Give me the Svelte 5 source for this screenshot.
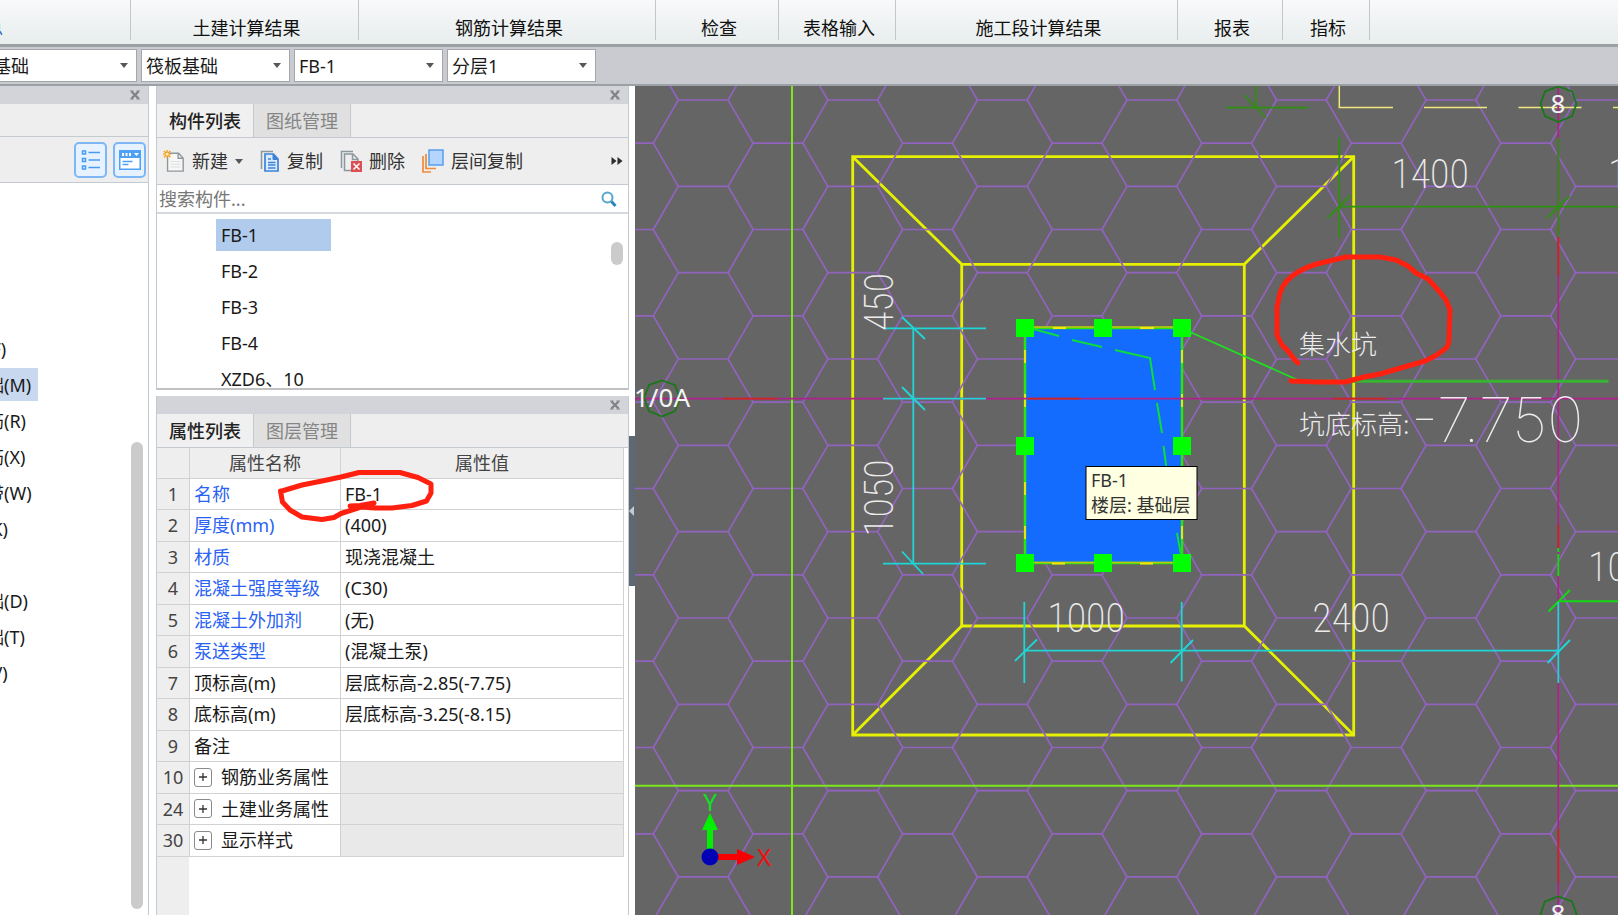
<script lang="ts">
  const groups = [
    { label: '汇总', width: 131, cut: true },
    { label: '土建计算结果', width: 228 },
    { label: '钢筋计算结果', width: 297 },
    { label: '检查', width: 123 },
    { label: '表格输入', width: 117 },
    { label: '施工段计算结果', width: 282 },
    { label: '报表', width: 105 },
    { label: '指标', width: 87 },
  ];

  const filters = [
    { id: 'category', label: '构件大类', value: '基础' },
    { id: 'type', label: '构件类型', value: '筏板基础' },
    { id: 'member', label: '构件名称', value: 'FB-1' },
    { id: 'layer', label: '分层', value: '分层1' },
  ];

  const modules = [
    '基础梁(F)', '筏板基础(M)', '筏板主筋(R)', '筏板负筋(X)', '基础板带(W)', '集水坑(K)',
    '柱墩(Y)', '独立基础(D)', '条形基础(T)', '桩承台(V)',
  ];
  let activeModule = $state('筏板基础(M)');

  const members = ['FB-1', 'FB-2', 'FB-3', 'FB-4', 'XZD6、10'];
  let activeMember = $state('FB-1');

  const properties = [
    { no: 1, name: '名称', value: 'FB-1', shared: true },
    { no: 2, name: '厚度(mm)', value: '(400)', shared: true },
    { no: 3, name: '材质', value: '现浇混凝土', shared: true },
    { no: 4, name: '混凝土强度等级', value: '(C30)', shared: true },
    { no: 5, name: '混凝土外加剂', value: '(无)', shared: true },
    { no: 6, name: '泵送类型', value: '(混凝土泵)', shared: true },
    { no: 7, name: '顶标高(m)', value: '层底标高-2.85(-7.75)' },
    { no: 8, name: '底标高(m)', value: '层底标高-3.25(-8.15)' },
    { no: 9, name: '备注', value: '' },
    { no: 10, name: '钢筋业务属性', value: '', group: true },
    { no: 24, name: '土建业务属性', value: '', group: true },
    { no: 30, name: '显示样式', value: '', group: true },
  ];

  // raft slab hatch: one open hexagon outline per cell
  const HEX_W = 149.55;
  const HEX_H = 86.33;
  function hatch() {
    let d = '';
    for (let c = -1; c < 9; c++) {
      for (let r = -1; r < 12; r++) {
        const x = 678.3 + c * HEX_W;
        const y = 100 + r * HEX_H;
        d += `M${x - 25} ${y + HEX_H / 2}L${x} ${y}H${x + 49.8}L${x + 74.8} ${y + HEX_H / 2}H${x + 124.6}`;
        d += `M${x - 25} ${y + HEX_H / 2}L${x} ${y + HEX_H}M${x + 74.8} ${y + HEX_H / 2}L${x + 49.8} ${y + HEX_H}`;
      }
    }
    return d;
  }

  const grips = [
    [1025, 328], [1103, 328], [1182, 328],
    [1025, 446], [1182, 446],
    [1025, 563], [1103, 563], [1182, 563],
  ];
</script>

{#snippet panelBar()}
  <div class="panel-bar">
    <button class="close" aria-label="关闭">
      <svg viewBox="0 0 10 10" width="10" height="10"><path d="M1.500 1.500L8.500 8.500M8.500 1.500L1.500 8.500" stroke="#808284" stroke-width="2.300" /><path d="M0 1h3.500M6.500 1H10M0 9h3.500M6.500 9H10" stroke="#808284" stroke-width="1" /></svg>
    </button>
  </div>
{/snippet}

<div class="app">
  <header class="ribbon">
    {#each groups as group}
      <div class="group" class:cut={group.cut} style="width: {group.width}px">{group.label}</div>
    {/each}
  </header>

  <div class="filters">
    {#each filters as filter}
      <div class="filter">
        <select id={filter.id} aria-label={filter.label}>
          <option>{filter.value}</option>
        </select>
        <svg class="caret" viewBox="0 0 8 5" width="8" height="5"><path d="M0 0h8L4 5z" fill="#55585a" /></svg>
      </div>
    {/each}
  </div>

  <main class="workspace">
    <aside class="modules">
      {@render panelBar()}
      <div class="modules-head"></div>
      <div class="modules-tools">
        <button class="view" aria-label="列表视图">
          <svg viewBox="0 0 20 20" width="20" height="20" fill="none" stroke="#4a9bf0" stroke-width="1.500">
            <path d="M1.500 1h3v3h-3zM1.500 8.500h3v3h-3zM1.500 16h3v3h-3z" />
            <path d="M7.500 2.500H19M7.500 10H19M7.500 17.500H19" />
          </svg>
        </button>
        <button class="view" aria-label="面板视图">
          <svg viewBox="0 0 22 20" width="22" height="20">
            <path d="M0 0h22v20H0z" fill="#4ea1f5" />
            <path d="M1.500 8h19v10.500h-19z" fill="#fff" />
            <path d="M3 3h2v3H3zM6.500 3h2v3h-2zM10 3h2v3h-2zM15 3h5l-2.500 3z" fill="#fff" />
            <path d="M3.500 11.500h10M3.500 14.500h6" stroke="#4ea1f5" stroke-width="1.500" />
          </svg>
        </button>
      </div>
      <ul class="module-list">
        {#each modules as name}
          <li>
            <button class:active={name === activeModule} onclick={() => (activeModule = name)}>{name}</button>
          </li>
        {/each}
      </ul>
      <div class="scroll-thumb modules-thumb"></div>
    </aside>

    <div class="middle">
      <section class="panel">
        {@render panelBar()}
        <div class="tabs">
          <button class="tab active">构件列表</button>
          <button class="tab">图纸管理</button>
        </div>
        <div class="tools">
          <button>
            <svg viewBox="0 0 24 24" width="22" height="22">
              <path d="M5 3.500h12l5 5.500v14H5z" fill="#f7f7f7" stroke="#8b979d" stroke-width="1.500" />
              <path d="M16.500 3.500v5.500H22" fill="none" stroke="#8b979d" stroke-width="1.500" />
              <path d="M8 12.500h11M8 15.500h11M8 18.500h11" stroke="#dcdcdc" />
              <path d="M1 1l7 7M8 1L1 8M4.500 0v9M0 4.500h9" stroke="#f6a01f" stroke-width="1.500" />
              <circle cx="4.500" cy="4.500" r="1.500" fill="#fff3c0" />
            </svg>
            <span>新建</span>
            <svg viewBox="0 0 8 5" width="8" height="5"><path d="M0 0h8L4 5z" fill="#55585a" /></svg>
          </button>
          <button>
            <svg viewBox="0 0 20 24" width="20" height="24">
              <path d="M1.500 20V2.500H13" fill="none" stroke="#8b979d" stroke-width="1.500" />
              <path d="M5 5h8.500l4.500 5v12H5z" fill="#dcecff" stroke="#3c82d6" stroke-width="1.700" />
              <path d="M13 5v5.500h5" fill="#3c82d6" stroke="#3c82d6" />
              <path d="M8 10h3M8 13.500h7.500M8 16h7.500M8 19h7.500" stroke="#3c82d6" stroke-width="1.300" />
            </svg>
            <span>复制</span>
          </button>
          <button>
            <svg viewBox="0 0 22 24" width="22" height="24">
              <path d="M1.500 19V2.500H13" fill="none" stroke="#8b979d" stroke-width="1.500" />
              <path d="M11 21.500H4.500V5H13l5 5v2" fill="none" stroke="#8b979d" stroke-width="1.500" />
              <path d="M12.500 5v5.500H18" fill="none" stroke="#8b979d" stroke-width="1.500" />
              <path d="M11 12h11v11H11z" fill="#d94f53" />
              <path d="M13.500 14.500l6 6M19.500 14.500l-6 6" stroke="#fff" stroke-width="1.500" />
            </svg>
            <span>删除</span>
          </button>
          <button>
            <svg viewBox="0 0 22 24" width="22" height="24">
              <path d="M1 7v16h8M4 5v14.500h10" fill="none" stroke="#f08a3c" stroke-width="1.700" />
              <path d="M7 1h14v15H7z" fill="#b3d5ff" stroke="#5a9fee" stroke-width="1.500" />
            </svg>
            <span>层间复制</span>
          </button>
          <button class="overflow" aria-label="更多">
            <svg viewBox="0 0 12 10" width="12" height="10"><path d="M0.500 1l5 4-5 4zM6.500 1l5 4-5 4z" fill="#2c2c2c" /></svg>
          </button>
        </div>
        <div class="search">
          <input type="text" placeholder="搜索构件..." aria-label="搜索构件" />
          <svg viewBox="0 0 16 16" width="16" height="16" fill="none">
            <circle cx="6.500" cy="6.500" r="5" stroke="#55a5cf" stroke-width="2" />
            <path d="M10.500 10.500l4 4.500" stroke="#2f86bb" stroke-width="3" />
          </svg>
        </div>
        <ul class="member-list">
          {#each members as name}
            <li>
              <button class:active={name === activeMember} onclick={() => (activeMember = name)}>{name}</button>
            </li>
          {/each}
          <li class="scroll-thumb member-thumb" aria-hidden="true"></li>
        </ul>
      </section>

      <section class="panel props">
        {@render panelBar()}
        <div class="tabs">
          <button class="tab active">属性列表</button>
          <button class="tab">图层管理</button>
        </div>
        <div class="props-body">
          <table>
            <thead>
              <tr><th class="no"></th><th class="name">属性名称</th><th>属性值</th></tr>
            </thead>
            <tbody>
              {#each properties as prop}
                <tr class:group-row={prop.group}>
                  <td class="no">{prop.no}</td>
                  <td class="name" class:shared={prop.shared}>
                    {#if prop.group}
                      <div class="expandable">
                        <button class="expand" aria-label="展开{prop.name}">
                          <svg viewBox="0 0 8 8" width="8" height="8"><path d="M0 4h8M4 0v8" stroke="#333" stroke-width="1.300" /></svg>
                        </button>
                        {prop.name}
                      </div>
                    {:else}
                      {prop.name}
                    {/if}
                  </td>
                  <td class="value">{prop.value}</td>
                </tr>
              {/each}
            </tbody>
          </table>
          <svg class="ink" viewBox="0 0 160 60" width="160" height="60">
            <path d="M6 20L26 14L46 10L65 6L83 1.500H124L142 6.500L155 13L155 22L150.500 30L136 34.500L116 37H99L85 36L65 42.500L58 46.500L46 48.500L26 46L14 39L6.500 31L4.500 20ZM74 35L84 34.500L98 32" transform="translate(0 3)" />
          </svg>
        </div>
      </section>
    </div>

    <div class="gutter">
      <button class="splitter" aria-label="收起面板">
        <svg viewBox="0 0 5 10" width="5" height="10"><path d="M5 0v10L0 5z" fill="#c3cad0" /></svg>
      </button>
    </div>

    <section class="canvas">
      <svg class="drawing" viewBox="635 86 983 829" preserveAspectRatio="xMinYMin slice" fill="none">
        <g stroke="#e6f000" stroke-width="2.800">
          <path d="M852.700 156.700H1353.700V735H852.700zM961.700 264.300H1244.300V626H961.700z" />
          <path d="M852.700 156.700L961.700 264.300M1353.700 156.700L1244.300 264.300M852.700 735L961.700 626M1353.700 735L1244.300 626" />
        </g>

        <path d={hatch()} stroke="#9163bf" stroke-width="1.700" />

        <path d="M792 86V915M635 785.700H1618" stroke="#7be61a" stroke-width="2" />

        <!-- beam edges -->
        <g stroke="#efe97c" stroke-width="1.500">
          <path d="M1339.300 86V107.500H1393M1424 107.500H1487M1518.500 107.500H1581.500M1613 107.500H1618" />
        </g>

        <rect x="1025" y="328" width="157" height="235" fill="#146cff" stroke="#2ae40c" stroke-width="2.500" />
        <path d="M1025 350V555M1182 350V555" stroke="#e6e80c" stroke-width="2" stroke-dasharray="13 31" />
        <path d="M1034 327H1173M1034 562.500H1173" stroke="#c2c80e" stroke-width="1.500" />
        <path d="M1053 328h13M1140 328h14M1052 563.500h13M1140 563.500h13" stroke="#f2e80c" stroke-width="2" />

        <!-- grid axes -->
        <path d="M635 398.700H1618M1558.300 86V915" stroke="#b0208c" stroke-width="1.700" />
        <path d="M723 398.700H777M1028 398.700H1080M1333 398.700H1386M1558.300 237V275M1558.300 525V548M1558.300 829V882" stroke="#d02420" stroke-width="1.700" />

        <path d="M1033 329L1059 336M1072 340L1102 347M1115 350L1150 358L1155 390M1157 403L1162 433M1163.500 446L1167 472M1177 533L1181 555" stroke="#0cdc3c" stroke-width="2" />
        <path d="M1190 332L1300 381" stroke="#20e020" stroke-width="1.800" />
        <path d="M1298 381.300H1608.500" stroke="#38b432" stroke-width="3" />

        <g stroke="#2f8f10" stroke-width="1.800">
          <path d="M1340 206.700H1618M1339.300 138V237.500M1558.300 138V237" />
          <path d="M1327.500 218L1350.500 195.500M1547 218L1569.500 196" />
          <path d="M1226 107.700H1308.500M1256 86V107M1244 95L1266 118" />
        </g>
        <path d="M1558.300 548V577" stroke="#14d814" stroke-width="2" stroke-dasharray="4 2 22" />
        <path d="M1559 601.300H1618M1548.500 611.500L1570 590" stroke="#14d814" stroke-width="2" />

        <!-- dimension lines -->
        <g stroke="#1fd6d6" stroke-width="1.800">
          <path d="M885 328.300H986M883 398.700H986M883 563.700H986M913.300 328V564" />
          <path d="M902 317L925 339M902 387L925 410M902 551.500L923 574" />
          <path d="M1024.300 650.700H1558.300M1024.300 602V683M1181.700 602V681.500M1558.300 602V683" />
          <path d="M1015 661L1037 639.500M1170.500 663L1193 640M1547.500 663L1570 640" />
        </g>

        <g fill="#00ff00">
          {#each grips as [x, y]}
            <rect x={x - 9} y={y - 9} width="18" height="18" />
          {/each}
        </g>

        <g stroke="#187818" stroke-width="1.800">
          <path d="M662 380.500L675 385L680 398L675 411L662 416.500L649 411L644 398L649 385z" />
          <path d="M1558.500 86.500L1572 91.500L1576.500 104L1572 116L1558.500 122L1545 116L1540.500 104L1545 91.500z" />
          <path d="M1558.500 896.500L1572 901.500L1576.500 914L1572 926L1558.500 932L1545 926L1540.500 914L1545 901.500z" />
        </g>
        <g class="axis-label" fill="#f4f4f4">
          <text x="690" y="407" text-anchor="end">1/0A</text>
          <text x="1558" y="113" text-anchor="middle">8</text>
          <text x="1558" y="923" text-anchor="middle">8</text>
        </g>

        <g class="dim" fill="#ececec">
          <text x="1430" y="188" text-anchor="middle">1400</text>
          <text x="1608" y="188">1</text>
          <text x="1086" y="632" text-anchor="middle">1000</text>
          <text x="1351" y="632" text-anchor="middle">2400</text>
          <text x="1588" y="581">1000</text>
          <text transform="translate(893 302) rotate(-90)" text-anchor="middle">450</text>
          <text transform="translate(893 498) rotate(-90)" text-anchor="middle">1050</text>
        </g>
        <g class="note" fill="#ececec">
          <text x="1299" y="354">集水坑</text>
          <text x="1299" y="434">坑底标高:</text>
        </g>
        <text class="level" x="1411" y="442" fill="#ececec">-7.750</text>

        <!-- ucs icon -->
        <path d="M710 857V829" stroke="#00f000" stroke-width="6" />
        <path d="M702 830L710 813L718 830z" fill="#00f000" />
        <path d="M710 857H738" stroke="#f80000" stroke-width="6" />
        <path d="M737 849L755 857L737 865z" fill="#f80000" />
        <circle cx="710" cy="857" r="8.500" fill="#0000b4" />
        <g class="ucs" text-anchor="middle">
          <text x="710" y="811" fill="#10e020">Y</text>
          <text x="764" y="866" fill="#f01010">X</text>
        </g>

        <g class="tooltip">
          <rect x="1086" y="466.500" width="111" height="53" fill="#ffffe1" stroke="#000" />
          <text x="1091" y="487" fill="#333">FB-1</text>
          <text x="1091" y="512" fill="#333">楼层: 基础层</text>
        </g>

        <path
          class="redline"
          d="M1298 363L1294 359L1288 351L1282 345L1277 335V307L1280 293Q1284 280 1298 272Q1310 265 1325 262L1346 257H1380L1396 260L1408 266L1416 273L1428 279L1439 291L1446 300L1450 310L1449 338Q1449 346 1445 349L1435 356L1425 361L1380 374L1364 377L1345 382H1318L1291 381"
        />
      </svg>
    </section>
  </main>
</div>

<style>
  :global(body) {
    margin: 0;
  }
  .app {
    display: flex;
    flex-direction: column;
    height: 100vh;
    overflow: hidden;
    background: #fff;
    color: #1a1a1a;
    font: 18px/24px 'Noto Sans', 'Noto Sans CJK SC', sans-serif;
  }
  button,
  input,
  select {
    font: inherit;
    color: inherit;
    margin: 0;
    padding: 0;
    border: 0;
    background: none;
    border-radius: 0;
  }
  ul {
    list-style: none;
    margin: 0;
    padding: 0;
  }

  .ribbon {
    display: flex;
    flex: none;
    height: 44px;
    border-bottom: 3px solid #9ba1a5;
    background: linear-gradient(#f8f9fa, #e8eded);
  }
  .group {
    box-sizing: border-box;
    flex: none;
    height: 40px;
    padding: 16px 0 0 4px;
    border-right: 1px solid #c3c7c9;
    text-align: center;
    white-space: nowrap;
    color: #111;
  }
  .group.cut {
    padding: 16px 127px 0 0;
    direction: rtl;
    color: #2b6cb8;
  }

  .filters {
    display: flex;
    flex: none;
    gap: 4px;
    padding: 2px 0;
    margin-left: -12px;
    border-bottom: 2px solid #9ba1a5;
    background: #c9cbd0;
  }
  .filter {
    display: grid;
    align-items: center;
    width: 149px;
  }
  .filter select {
    grid-area: 1 / 1;
    box-sizing: border-box;
    width: 100%;
    height: 33px;
    padding: 0 24px 0 4px;
    border: 1px solid #a3a6aa;
    background: #fff;
    appearance: none;
  }
  .caret {
    grid-area: 1 / 1;
    justify-self: end;
    margin-right: 9px;
    pointer-events: none;
  }

  .workspace {
    display: flex;
    flex: 1;
    min-height: 0;
  }
  .panel-bar {
    display: flex;
    flex: none;
    justify-content: flex-end;
    align-items: center;
    height: 18px;
    padding-right: 8px;
    background: #d3d4d9;
  }
  .close {
    display: flex;
  }
  .scroll-thumb {
    width: 12px;
    border-radius: 6px;
    background: #cbcbcb;
  }

  .modules {
    position: relative;
    flex: none;
    width: 148px;
    margin-right: 7px;
    border-right: 1px solid #c5cad0;
    overflow: hidden;
  }
  .modules-head {
    height: 32px;
    background: #eee;
    border-bottom: 1px solid #c5cad0;
  }
  .modules-tools {
    display: flex;
    justify-content: flex-end;
    align-items: center;
    gap: 6px;
    height: 45px;
    padding-right: 2px;
    background: #eee;
    border-bottom: 1px solid #c5cad0;
  }
  .view {
    display: flex;
    align-items: center;
    justify-content: center;
    box-sizing: border-box;
    width: 33px;
    height: 36px;
    border: 2px solid #7db7f5;
    border-radius: 5px;
    background: #e6f2ff;
  }
  .module-list {
    display: flex;
    flex-direction: column;
    gap: 3px;
    margin: 149px 0 0 -71px;
  }
  .module-list li,
  .member-list li {
    display: flex;
  }
  .module-list button {
    height: 33px;
    padding: 0 7px 0 3px;
    white-space: nowrap;
  }
  .module-list .active {
    background: #c8d8ef;
  }
  .modules-thumb {
    position: absolute;
    right: 5px;
    top: 356px;
    bottom: 6px;
  }

  .middle {
    display: flex;
    flex-direction: column;
    gap: 6px;
    flex: none;
    width: 473px;
  }
  .panel {
    display: flex;
    flex-direction: column;
    flex: none;
    border: solid #c5cad0;
    border-width: 0 1px;
  }
  .tabs {
    display: flex;
    flex: none;
    height: 33px;
    background: #eee;
    border-bottom: 1px solid #c5cad0;
  }
  .tab {
    box-sizing: border-box;
    width: 97px;
    border-right: 1px solid #c5cad0;
    background: #e0e0e0;
    color: #858585;
  }
  .tab.active {
    background: #f0f0f0;
    color: #222;
    font-weight: 500;
  }
  .tools {
    display: flex;
    align-items: center;
    gap: 17px;
    height: 46px;
    padding: 0 5px 0 6px;
    background: #eee;
    border-bottom: 1px solid #c5cad0;
    color: #333;
  }
  .tools button {
    display: flex;
    align-items: center;
    gap: 7px;
  }
  .tools .overflow {
    margin-left: auto;
  }
  .search {
    display: flex;
    align-items: center;
    height: 27px;
    padding: 0 11px 0 2px;
    border-bottom: 2px solid #d5d8dc;
  }
  .search input {
    flex: 1;
    min-width: 0;
    outline: 0;
  }
  .search input::placeholder {
    color: #777;
    opacity: 1;
  }
  .member-list {
    position: relative;
    display: flex;
    flex-direction: column;
    gap: 4px;
    height: 169px;
    padding: 5px 0 0 59px;
    border-bottom: 2px solid #bfc1c3;
    overflow: hidden;
  }
  .member-list button {
    width: 115px;
    height: 32px;
    padding-left: 5px;
    text-align: left;
    box-sizing: border-box;
  }
  .member-list .active {
    background: #b1cbec;
  }
  .member-list .member-thumb {
    position: absolute;
    right: 5px;
    top: 28px;
    height: 23px;
  }

  .props {
    flex: 1;
    min-height: 0;
  }
  .props-body {
    position: relative;
    flex: 1;
    padding-right: 4px;
    background: linear-gradient(90deg, #eee 32px, #fff 32px);
  }
  table {
    width: 100%;
    border-collapse: collapse;
    table-layout: fixed;
  }
  thead tr {
    height: 30px;
  }
  tbody tr {
    height: 31px;
  }
  tbody tr:nth-child(even) {
    height: 32px;
  }
  th,
  td {
    padding: 0;
    border: solid #d2d2d2;
    border-width: 0 1px 1px 0;
    white-space: nowrap;
  }
  th {
    background: #eee;
    color: #444;
    font-weight: 400;
  }
  td {
    background: #fff;
  }
  .no {
    width: 32px;
    background: #eee;
    color: #444;
    text-align: center;
  }
  .name {
    width: 151px;
  }
  td.name,
  .value {
    padding-left: 4px;
  }
  th.name,
  td.name {
    box-sizing: border-box;
  }
  .shared {
    color: #2a62f4;
  }
  .group-row .value {
    background: #e9e9e9;
  }
  .expandable {
    display: flex;
    align-items: center;
    gap: 9px;
  }
  .expand {
    display: flex;
    align-items: center;
    justify-content: center;
    box-sizing: border-box;
    width: 18px;
    height: 19px;
    border: 1px solid #8a8a8a;
    border-radius: 3px;
  }
  .ink {
    position: absolute;
    left: 119px;
    top: 20px;
    pointer-events: none;
  }
  .ink path,
  .redline {
    fill: none;
    stroke: #ff2010;
    stroke-width: 5px;
    stroke-linejoin: round;
    stroke-linecap: round;
  }

  .gutter {
    display: flex;
    flex: none;
    align-items: center;
    width: 6px;
    padding-top: 20px;
    background: #fff;
  }
  .splitter {
    display: flex;
    align-items: center;
    width: 6px;
    height: 150px;
    background: #5c6874;
  }

  .canvas {
    flex: 1;
    min-width: 0;
    background: #656565;
    overflow: hidden;
  }
  .drawing {
    display: block;
    width: 100%;
    height: 100%;
  }
  .axis-label {
    font-size: 26px;
  }
  .dim {
    font-family: 'Roboto Condensed', 'Open Sans Condensed', 'Noto Sans CJK SC', sans-serif;
    font-size: 40px;
    font-weight: 200;
  }
  .note {
    font-family: 'Noto Sans CJK SC', sans-serif;
    font-size: 26px;
    font-weight: 300;
  }
  .level {
    font-family: Inter, Lato, sans-serif;
    font-size: 62px;
    font-weight: 100;
  }
  .ucs {
    font-size: 24px;
  }
  .tooltip {
    font-size: 18px;
  }
</style>
